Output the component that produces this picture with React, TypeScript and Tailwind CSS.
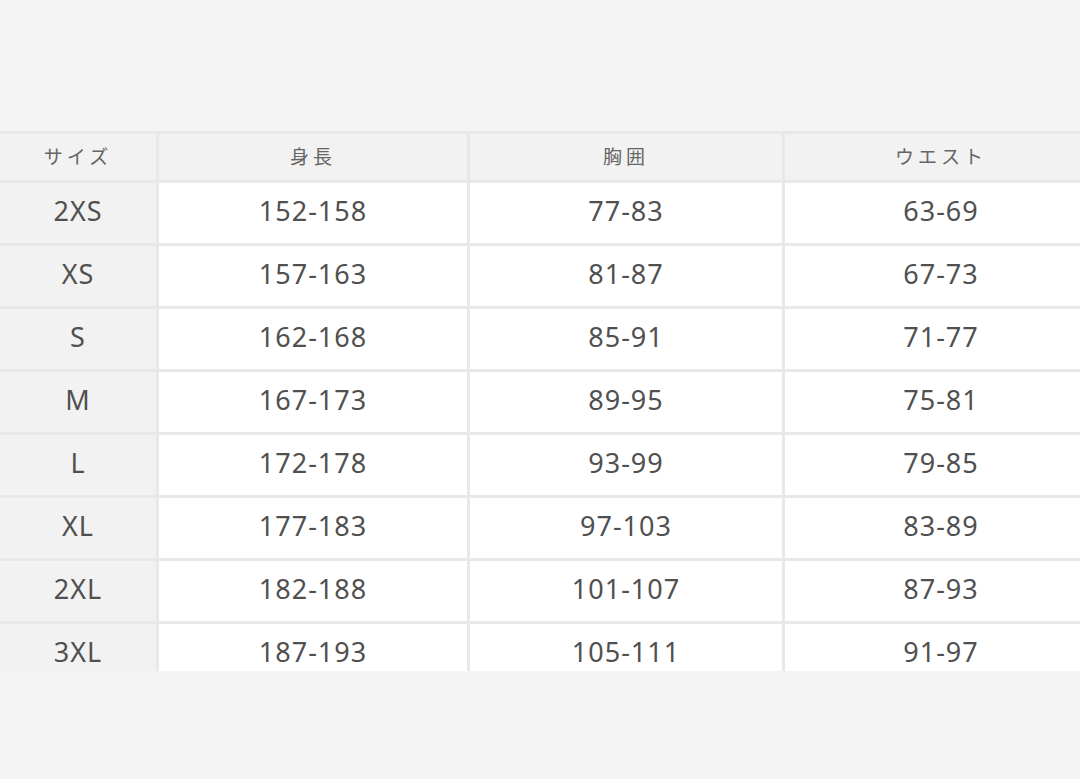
import React from 'react';

const rows: [string, string, string, string][] = [
  ['2XS', '152-158', '77-83', '63-69'],
  ['XS', '157-163', '81-87', '67-73'],
  ['S', '162-168', '85-91', '71-77'],
  ['M', '167-173', '89-95', '75-81'],
  ['L', '172-178', '93-99', '79-85'],
  ['XL', '177-183', '97-103', '83-89'],
  ['2XL', '182-188', '101-107', '87-93'],
  ['3XL', '187-193', '105-111', '91-97'],
];

const headers = ['サイズ', '身長', '胸囲', 'ウエスト'];

const font = { fontFamily: '"Noto Sans", "Noto Sans CJK JP", sans-serif' };

export default function App() {
  return (
    <div className="w-[1080px] h-[779px] overflow-hidden bg-[#f4f4f4] pt-[131px]" style={font}>
      <div className="w-[1100px] h-[540px] overflow-hidden bg-[#e8e8e8] pt-[3px]">
        <div className="grid grid-cols-[156px_308px_312px_312px] grid-rows-[46px] auto-rows-[60px] gap-[3px]">
          {headers.map((h) => (
            <div
              key={h}
              className="flex items-center justify-center bg-[#f2f2f2] text-[19px] tracking-[4px] text-[#666666]"
            >
              {h}
            </div>
          ))}
          {rows.map((r) =>
            r.map((cell, i) => (
              <div
                key={r[0] + i}
                className={
                  'flex items-center justify-center pb-[3px] text-[27px] tracking-[1px] text-[#505050] ' +
                  (i === 0 ? 'bg-[#f2f2f2]' : 'bg-white')
                }
              >
                {cell}
              </div>
            ))
          )}
        </div>
      </div>
    </div>
  );
}
